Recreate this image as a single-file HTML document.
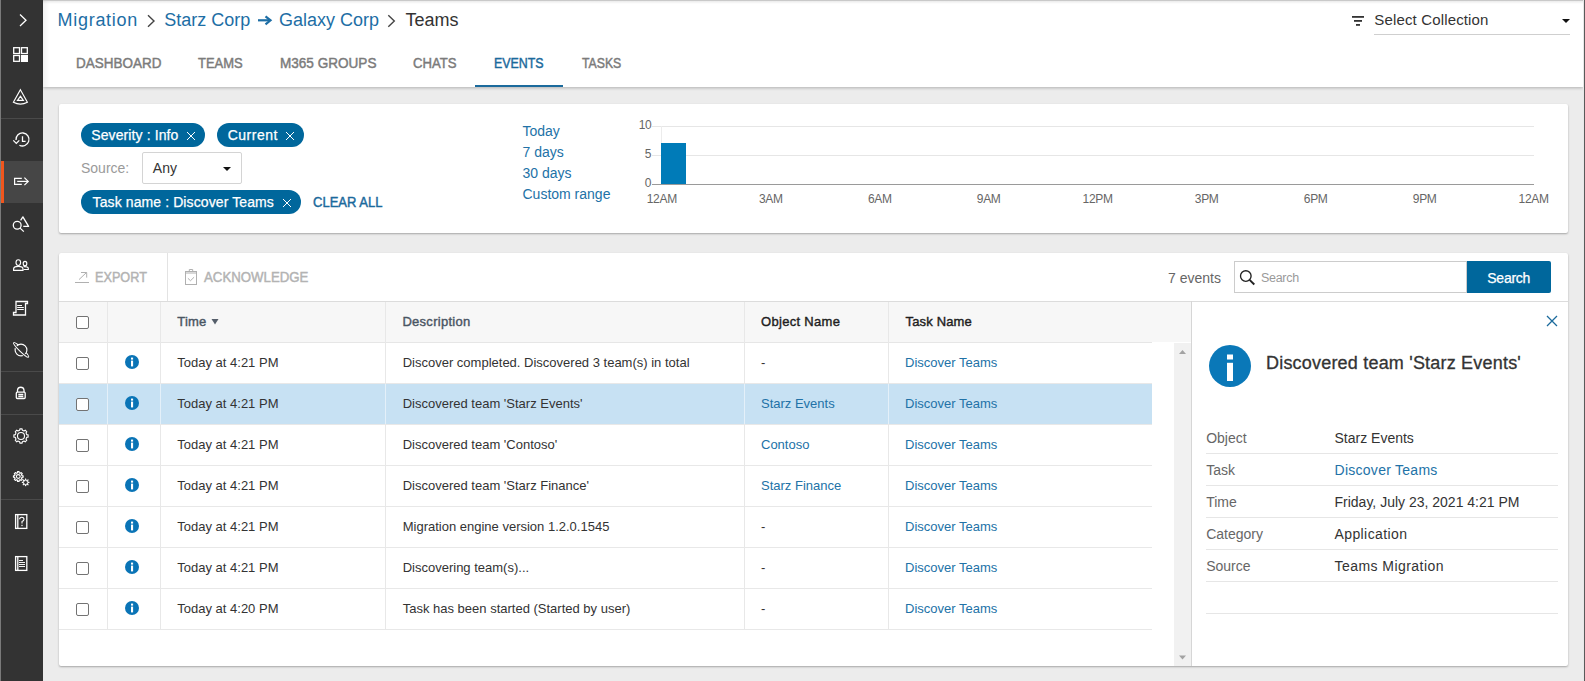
<!DOCTYPE html>
<html><head><meta charset="utf-8"><style>
html,body{margin:0;padding:0}
body{width:1585px;height:681px;overflow:hidden;position:relative;background:#ececec;font-family:"Liberation Sans",sans-serif}
.a{position:absolute}
.t{position:absolute;white-space:nowrap;line-height:1}
svg.a{overflow:visible}
</style></head><body>
<div class="a" style="left:0px;top:0px;width:1px;height:681px;background:#7a7a7a;"></div>
<div class="a" style="left:1px;top:0px;width:42px;height:681px;background:#333333;"></div>
<div class="a" style="left:1px;top:161px;width:42px;height:42px;background:#464646;"></div>
<div class="a" style="left:1px;top:161px;width:3px;height:42px;background:#f0561d;"></div>
<div class="a" style="left:1px;top:118px;width:42px;height:1px;background:#4a4a4a;"></div>
<div class="a" style="left:1px;top:371px;width:42px;height:1px;background:#4a4a4a;"></div>
<div class="a" style="left:1px;top:414px;width:42px;height:1px;background:#4a4a4a;"></div>
<div class="a" style="left:1px;top:499px;width:42px;height:1px;background:#4a4a4a;"></div>
<svg class="a" style="left:0;top:0" width="43" height="681" viewBox="0 0 43 681" fill="none" stroke="#fff" stroke-width="1.3"><path d="M20 14.5 L26 20.2 L20 26"/><rect x="13.7" y="47.7" width="5.8" height="5.8"/><rect x="21.5" y="47.7" width="5.8" height="5.8"/><rect x="13.7" y="55.5" width="5.8" height="5.8"/><rect x="21" y="55" width="7" height="7" fill="#fff" stroke="none"/><path d="M20.4 89.8 L27.4 102.3 Q20.4 106 13.4 102.3 Z" stroke-width="1.15"/><path d="M20.4 96.2 L23.3 100.4 L17.5 100.4 Z" stroke-width="1.2"/><path d="M16 140 A6.5 6.5 0 1 1 19.4 145.2"/><path d="M13.3 140.4 L16.3 143.4 L19.3 140.4"/><path d="M22.5 136.2 L22.5 141.3 L25.6 141.3"/><path d="M21.8 178.4 L14.6 178.4 L14.6 184.4 L21.8 184.4" stroke-width="1.2"/><path d="M17.2 181.4 L28.2 181.4" stroke-width="1.2"/><path d="M24.4 177.6 L28.2 181.4 L24.4 185.2" stroke-width="1.2"/><circle cx="17.2" cy="225.3" r="3.9"/><path d="M20.1 228.1 L23.8 231.6"/><path d="M20.6 220.3 L22.9 216.9 L28.6 226.4 L23.3 226.4" stroke-linejoin="round"/><ellipse cx="18.3" cy="262.6" rx="2.3" ry="2.9" stroke-width="1.15"/><path d="M13.6 270.3 L13.6 269 Q13.6 266.3 18.3 266.3 Q23 266.3 23 269 L23 270.3 Z" stroke-width="1.15"/><ellipse cx="25" cy="263.6" rx="1.8" ry="2.3" stroke-width="1.15"/><path d="M23.6 266.6 Q28.3 266.4 28.3 268.5 L28.3 269.5 L23.6 269.5" stroke-width="1.15"/><path d="M16 301.5 L27.5 301.5 L27.5 303.5 L25.5 303.5 L25.5 315 L13.5 315 L13.5 312.5 L16 312.5 Z"/><path d="M17.2 305.5 L22 305.5 M17.2 307.5 L23.8 307.5 M17.2 309.5 L23.8 309.5" stroke-width="1"/><g transform="translate(21.1 349.9) rotate(44)"><ellipse cx="0" cy="0" rx="10.4" ry="1.7" stroke-width="1.1"/></g><circle cx="21" cy="350" r="5.9" stroke-width="1.15" fill="#333"/><g transform="translate(21.1 349.9) rotate(44)"><path d="M10.4 0 A10.4 1.7 0 0 1 -10.4 0" stroke="#333" stroke-width="2.6"/><path d="M10.4 0 A10.4 1.7 0 0 1 -10.4 0" stroke-width="1.1"/></g><path d="M17.5 392 L17.5 390 A3.3 3.3 0 0 1 24 390 L24 392"/><rect x="16.3" y="392.2" width="8.9" height="6.3" rx="1"/><path d="M18.3 394.5 L23.3 394.5 M18.3 396.5 L23.3 396.5"/><circle cx="21" cy="436" r="3.5" stroke-width="1.1"/><path stroke-width="1.1" d="M19.67 430.25 L19.87 428.89 L22.13 428.89 L22.33 430.25 L24.12 430.99 L25.23 430.18 L26.82 431.77 L26.01 432.88 L26.75 434.67 L28.11 434.87 L28.11 437.13 L26.75 437.33 L26.01 439.12 L26.82 440.23 L25.23 441.82 L24.12 441.01 L22.33 441.75 L22.13 443.11 L19.87 443.11 L19.67 441.75 L17.88 441.01 L16.77 441.82 L15.18 440.23 L15.99 439.12 L15.25 437.33 L13.89 437.13 L13.89 434.87 L15.25 434.67 L15.99 432.88 L15.18 431.77 L16.77 430.18 L17.88 430.99 Z" stroke-linejoin="round"/><circle cx="18.3" cy="476.5" r="1.9" stroke-width="1.1"/><path d="M17.38 472.92 L17.53 471.66 L19.07 471.66 L19.22 472.92 L20.18 473.32 L21.18 472.54 L22.26 473.62 L21.48 474.62 L21.88 475.58 L23.14 475.73 L23.14 477.27 L21.88 477.42 L21.48 478.38 L22.26 479.38 L21.18 480.46 L20.18 479.68 L19.22 480.08 L19.07 481.34 L17.53 481.34 L17.38 480.08 L16.42 479.68 L15.42 480.46 L14.34 479.38 L15.12 478.38 L14.72 477.42 L13.46 477.27 L13.46 475.73 L14.72 475.58 L15.12 474.62 L14.34 473.62 L15.42 472.54 L16.42 473.32 Z" stroke-linejoin="round" stroke-width="1.15"/><path d="M25.60 478.70 L26.25 480.83 L28.22 479.78 L27.17 481.75 L29.30 482.40 L27.17 483.05 L28.22 485.02 L26.25 483.97 L25.60 486.10 L24.95 483.97 L22.98 485.02 L24.03 483.05 L21.90 482.40 L24.03 481.75 L22.98 479.78 L24.95 480.83 Z" stroke-width="1" stroke-linejoin="round"/><rect x="15.6" y="514.6" width="11.2" height="13.8"/><path d="M17.8 514.6 L17.8 528.4"/><rect x="15.6" y="556.6" width="11.2" height="13.8"/><path d="M17.8 556.6 L17.8 570.4"/><path d="M19 560.5 L23 560.5 M19 562.5 L25 562.5 M19 564.5 L25 564.5 M19 566.5 L25 566.5" stroke-width="0.95"/><path d="M19.6 519.3 Q19.6 517.2 21.8 517.2 Q24 517.2 24 519.3 Q24 520.8 22 521.6 L22 523.6" stroke-width="1.1"/><rect x="21.4" y="524.8" width="1.2" height="1.3" fill="#fff" stroke="none"/></svg>
<div class="a" style="left:43px;top:0px;width:1540px;height:87px;background:#fff;box-shadow:0 1px 3px rgba(0,0,0,0.25);"></div>
<div class="a" style="left:43px;top:0px;width:1540px;height:1px;background:#c9c9c9;"></div>
<div class="a" style="left:43px;top:1px;width:7px;height:86px;background:linear-gradient(to right, rgba(0,0,0,0.055), rgba(0,0,0,0));"></div>
<div class="a" style="left:43px;top:1px;width:1540px;height:3px;background:linear-gradient(to bottom, rgba(0,0,0,0.08), rgba(0,0,0,0));"></div>
<div class="a" style="left:1583px;top:0px;width:1px;height:681px;background:#e8e8e8;"></div>
<div class="a" style="left:1584px;top:0px;width:1px;height:681px;background:#5a5a5a;"></div>
<div class="t" style="left:57.5px;top:10.56px;font-size:18px;color:#1d6ea5;letter-spacing:0.72px;">Migration</div>
<div class="t" style="left:164.2px;top:10.56px;font-size:18px;color:#1d6ea5;">Starz Corp</div>
<div class="t" style="left:279.0px;top:10.56px;font-size:18px;color:#1d6ea5;">Galaxy Corp</div>
<div class="t" style="left:405.5px;top:10.56px;font-size:18px;color:#333;">Teams</div>
<svg class="a" style="left:140px;top:10px" width="270" height="25" fill="none" stroke="#444" stroke-width="1.4"><path d="M8 5.2 L14 11 L8 16.8"/><path d="M248.3 5.2 L254.3 11 L248.3 16.8"/><path d="M118 10.3 L130 10.3" stroke="#1d6ea5" stroke-width="2.2"/><path d="M125.5 6.3 L130.5 10.3 L125.5 14.3" stroke="#1d6ea5" stroke-width="2.2"/></svg>
<div class="t" style="left:75.5px;top:56.25px;font-size:14px;color:#7b7b7b;transform:scaleX(0.9630500000000001);transform-origin:0 0;-webkit-text-stroke:0.45px #7b7b7b;">DASHBOARD</div>
<div class="t" style="left:197.8px;top:56.25px;font-size:14px;color:#7b7b7b;transform:scaleX(0.927);transform-origin:0 0;-webkit-text-stroke:0.45px #7b7b7b;">TEAMS</div>
<div class="t" style="left:279.6px;top:56.25px;font-size:14px;color:#7b7b7b;transform:scaleX(0.9682);transform-origin:0 0;-webkit-text-stroke:0.45px #7b7b7b;">M365 GROUPS</div>
<div class="t" style="left:413.0px;top:56.25px;font-size:14px;color:#7b7b7b;transform:scaleX(0.9373);transform-origin:0 0;-webkit-text-stroke:0.45px #7b7b7b;">CHATS</div>
<div class="t" style="left:494.0px;top:56.25px;font-size:14px;color:#1b6a9c;transform:scaleX(0.8858);transform-origin:0 0;-webkit-text-stroke:0.45px #1b6a9c;">EVENTS</div>
<div class="t" style="left:581.5px;top:56.25px;font-size:14px;color:#7b7b7b;transform:scaleX(0.8755);transform-origin:0 0;-webkit-text-stroke:0.45px #7b7b7b;">TASKS</div>
<div class="a" style="left:475px;top:85px;width:88px;height:2px;background:#1b6a9c;"></div>
<div class="t" style="left:1374.3px;top:12.40px;font-size:15px;color:#333;letter-spacing:0.15px;">Select Collection</div>
<div class="a" style="left:1374px;top:34px;width:196px;height:1px;background:#cfcfcf;"></div>
<svg class="a" style="left:1350px;top:14px" width="225" height="14"><path d="M212 5 L220 5 L216 9 Z" fill="#111"/><rect x="2" y="2" width="12" height="1.8" fill="#333"/><rect x="4" y="6" width="8" height="1.8" fill="#333"/><rect x="6" y="10" width="4" height="1.8" fill="#333"/></svg>
<div class="a" style="left:59px;top:104px;width:1509px;height:129px;background:#fff;box-shadow:0 1px 2px rgba(0,0,0,0.3);border-radius:2px;"></div>
<div class="a" style="left:81px;top:123px;width:124px;height:24px;background:#00679c;border-radius:12px;"></div>
<div class="t" style="left:91.3px;top:128.15px;font-size:14px;color:#fff;letter-spacing:0.1px;-webkit-text-stroke:0.25px #fff;">Severity : Info</div>
<svg class="a" style="left:185.7px;top:130.6px" width="10" height="10" stroke="#fff" stroke-width="1.0"><path d="M1 1 L9 9 M9 1 L1 9"/></svg>
<div class="a" style="left:217px;top:123px;width:87px;height:24px;background:#00679c;border-radius:12px;"></div>
<div class="t" style="left:227.7px;top:128.15px;font-size:14px;color:#fff;letter-spacing:0.5px;-webkit-text-stroke:0.25px #fff;">Current</div>
<svg class="a" style="left:284.5px;top:130.6px" width="10" height="10" stroke="#fff" stroke-width="1.0"><path d="M1 1 L9 9 M9 1 L1 9"/></svg>
<div class="a" style="left:81px;top:190px;width:220px;height:24px;background:#00679c;border-radius:12px;"></div>
<div class="t" style="left:92.6px;top:195.15px;font-size:14px;color:#fff;letter-spacing:0.1px;-webkit-text-stroke:0.25px #fff;">Task name : Discover Teams</div>
<svg class="a" style="left:281.8px;top:197.6px" width="10" height="10" stroke="#fff" stroke-width="1.0"><path d="M1 1 L9 9 M9 1 L1 9"/></svg>
<div class="t" style="left:81.0px;top:161.05px;font-size:14px;color:#9a9a9a;">Source:</div>
<div class="a" style="left:142px;top:152px;width:100px;height:32px;background:#fff;border:1px solid #d4d4d4;box-sizing:border-box;border-radius:2px;"></div>
<div class="t" style="left:152.8px;top:161.05px;font-size:14px;color:#333;">Any</div>
<svg class="a" style="left:222px;top:166px" width="10" height="6"><path d="M1 1 L9 1 L5 5 Z" fill="#111"/></svg>
<div class="t" style="left:313.2px;top:195.45px;font-size:14px;color:#1b6a9c;transform:scaleX(0.93);transform-origin:0 0;-webkit-text-stroke:0.45px #1b6a9c;">CLEAR ALL</div>
<div class="t" style="left:522.5px;top:124.05px;font-size:14px;color:#2272a7;">Today</div>
<div class="t" style="left:522.5px;top:144.85px;font-size:14px;color:#2272a7;">7 days</div>
<div class="t" style="left:522.5px;top:165.75px;font-size:14px;color:#2272a7;">30 days</div>
<div class="t" style="left:522.5px;top:186.75px;font-size:14px;color:#2272a7;">Custom range</div>
<div class="a" style="left:652px;top:126px;width:882px;height:1px;background:#e6e6e6;"></div>
<div class="a" style="left:652px;top:155px;width:882px;height:1px;background:#e6e6e6;"></div>
<div class="a" style="left:652px;top:184px;width:882px;height:1px;background:#9a9a9a;"></div>
<div class="a" style="left:661px;top:126px;width:1px;height:58px;background:#ececec;"></div>
<div class="a" style="left:661px;top:143px;width:25px;height:41px;background:#007bb8;"></div>
<div class="t" style="left:621.5px;width:30px;text-align:right;top:118.84px;font-size:12px;color:#666;font-weight:normal;letter-spacing:-0.3px">10</div>
<div class="t" style="left:621.5px;width:30px;text-align:right;top:147.84px;font-size:12px;color:#666;font-weight:normal;letter-spacing:0px">5</div>
<div class="t" style="left:621.5px;width:30px;text-align:right;top:176.84px;font-size:12px;color:#666;font-weight:normal;letter-spacing:0px">0</div>
<div class="t" style="left:631.8px;width:60px;text-align:center;top:192.64px;font-size:12px;color:#666;font-weight:normal;letter-spacing:-0.3px">12AM</div>
<div class="t" style="left:740.8px;width:60px;text-align:center;top:192.64px;font-size:12px;color:#666;font-weight:normal;letter-spacing:-0.3px">3AM</div>
<div class="t" style="left:849.8px;width:60px;text-align:center;top:192.64px;font-size:12px;color:#666;font-weight:normal;letter-spacing:-0.3px">6AM</div>
<div class="t" style="left:958.7px;width:60px;text-align:center;top:192.64px;font-size:12px;color:#666;font-weight:normal;letter-spacing:-0.3px">9AM</div>
<div class="t" style="left:1067.7px;width:60px;text-align:center;top:192.64px;font-size:12px;color:#666;font-weight:normal;letter-spacing:-0.3px">12PM</div>
<div class="t" style="left:1176.7px;width:60px;text-align:center;top:192.64px;font-size:12px;color:#666;font-weight:normal;letter-spacing:-0.3px">3PM</div>
<div class="t" style="left:1285.7px;width:60px;text-align:center;top:192.64px;font-size:12px;color:#666;font-weight:normal;letter-spacing:-0.3px">6PM</div>
<div class="t" style="left:1394.7px;width:60px;text-align:center;top:192.64px;font-size:12px;color:#666;font-weight:normal;letter-spacing:-0.3px">9PM</div>
<div class="t" style="left:1503.6px;width:60px;text-align:center;top:192.64px;font-size:12px;color:#666;font-weight:normal;letter-spacing:-0.3px">12AM</div>
<div class="a" style="left:59px;top:253px;width:1509px;height:413px;background:#fff;box-shadow:0 1px 2px rgba(0,0,0,0.3);border-radius:2px;"></div>
<div class="a" style="left:59px;top:301px;width:1509px;height:1px;background:#dcdcdc;"></div>
<div class="a" style="left:167px;top:253px;width:1px;height:48px;background:#e3e3e3;"></div>
<svg class="a" style="left:74px;top:268px" width="130" height="20" fill="none" stroke="#b0b0b0" stroke-width="1"><path d="M1 14.5 L15 14.5"/><path d="M5 11.6 L12.4 4.6"/><path d="M7 4.5 L12.7 4.5 L12.7 9.6"/><rect x="111.5" y="3.5" width="11" height="13"/><path d="M111.5 5 L122.5 5"/><path d="M115.3 3.5 L115.3 1.5 L118.7 1.5 L118.7 3.5"/><path d="M113.9 10.3 L116.5 12.7 L120.1 9.2"/></svg>
<div class="t" style="left:94.5px;top:270.15px;font-size:14px;color:#b3b3b3;transform:scaleX(0.905);transform-origin:0 0;-webkit-text-stroke:0.45px #b3b3b3;">EXPORT</div>
<div class="t" style="left:204.0px;top:270.15px;font-size:14px;color:#b3b3b3;transform:scaleX(0.945);transform-origin:0 0;-webkit-text-stroke:0.45px #b3b3b3;">ACKNOWLEDGE</div>
<div class="t" style="left:1168.0px;top:270.95px;font-size:14px;color:#666;">7 events</div>
<div class="a" style="left:1234px;top:261px;width:233px;height:32px;background:#fff;border:1px solid #cccccc;box-sizing:border-box;"></div>
<svg class="a" style="left:1238px;top:268px" width="20" height="20" fill="none" stroke="#222" stroke-width="1.5"><circle cx="7.8" cy="8" r="5.3" stroke-width="1.35"/><path d="M11.6 11.8 L16.3 16.5" stroke-width="1.9"/></svg>
<div class="t" style="left:1261.0px;top:272.22px;font-size:12.5px;color:#9a9a9a;letter-spacing:-0.3px;">Search</div>
<div class="a" style="left:1467px;top:261px;width:84px;height:32px;background:#00679c;border-radius:0 2px 2px 0;"></div>
<div class="t" style="left:1487.3px;top:270.95px;font-size:14px;color:#fff;letter-spacing:-0.26px;-webkit-text-stroke:0.25px #fff;">Search</div>
<div class="a" style="left:59px;top:302px;width:1132px;height:40px;background:#f7f7f7;"></div>
<div class="a" style="left:59px;top:342px;width:1093px;height:1px;background:#e6e6e6;"></div>
<div class="a" style="left:107px;top:302px;width:1px;height:327px;background:#e8e8e8;"></div>
<div class="a" style="left:160px;top:302px;width:1px;height:327px;background:#e8e8e8;"></div>
<div class="a" style="left:385px;top:302px;width:1px;height:327px;background:#e8e8e8;"></div>
<div class="a" style="left:744px;top:302px;width:1px;height:327px;background:#e8e8e8;"></div>
<div class="a" style="left:888px;top:302px;width:1px;height:327px;background:#e8e8e8;"></div>
<div class="a" style="left:76px;top:316px;width:13px;height:13px;background:#fff;border:1px solid #737373;box-sizing:border-box;border-radius:2px;"></div>
<div class="t" style="left:177.3px;top:315.00px;font-size:13px;color:#4a5563;letter-spacing:0.2px;-webkit-text-stroke:0.4px #4a5563;">Time</div>
<svg class="a" style="left:211px;top:318px" width="9" height="8"><path d="M0.5 1 L7.5 1 L4 6.5 Z" fill="#555e6a"/></svg>
<div class="t" style="left:402.4px;top:315.00px;font-size:13px;color:#4a5563;letter-spacing:0.28px;-webkit-text-stroke:0.4px #4a5563;">Description</div>
<div class="t" style="left:761.0px;top:315.00px;font-size:13px;color:#1e1e1e;letter-spacing:0.3px;-webkit-text-stroke:0.4px #1e1e1e;">Object Name</div>
<div class="t" style="left:905.6px;top:315.00px;font-size:13px;color:#1e1e1e;letter-spacing:0.15px;-webkit-text-stroke:0.4px #1e1e1e;">Task Name</div>
<div class="a" style="left:59px;top:383px;width:1093px;height:1px;background:#e8e8e8;"></div>
<div class="a" style="left:76px;top:357px;width:13px;height:13px;background:#fff;border:1px solid #737373;box-sizing:border-box;border-radius:2px;"></div>
<svg class="a" style="left:125px;top:355px" width="14" height="14"><circle cx="7" cy="7" r="7" fill="#0a74b6"/><rect x="6" y="2.6" width="2.1" height="2" fill="#fff"/><rect x="6" y="5.6" width="2.1" height="5.8" fill="#fff"/></svg>
<div class="t" style="left:177.3px;top:355.80px;font-size:13px;color:#333;">Today at 4:21 PM</div>
<div class="t" style="left:402.7px;top:355.80px;font-size:13px;color:#333;">Discover completed. Discovered 3 team(s) in total</div>
<div class="t" style="left:761.0px;top:355.80px;font-size:13px;color:#333;">-</div>
<div class="t" style="left:905.0px;top:355.80px;font-size:13px;color:#2272a7;">Discover Teams</div>
<div class="a" style="left:59px;top:384px;width:1093px;height:40px;background:#c7e1f3;"></div>
<div class="a" style="left:107px;top:384px;width:1px;height:40px;background:#e4f0f9;"></div>
<div class="a" style="left:160px;top:384px;width:1px;height:40px;background:#e4f0f9;"></div>
<div class="a" style="left:385px;top:384px;width:1px;height:40px;background:#e4f0f9;"></div>
<div class="a" style="left:744px;top:384px;width:1px;height:40px;background:#e4f0f9;"></div>
<div class="a" style="left:888px;top:384px;width:1px;height:40px;background:#e4f0f9;"></div>
<div class="a" style="left:59px;top:424px;width:1093px;height:1px;background:#e8e8e8;"></div>
<div class="a" style="left:76px;top:398px;width:13px;height:13px;background:#fff;border:1px solid #737373;box-sizing:border-box;border-radius:2px;"></div>
<svg class="a" style="left:125px;top:396px" width="14" height="14"><circle cx="7" cy="7" r="7" fill="#0a74b6"/><rect x="6" y="2.6" width="2.1" height="2" fill="#fff"/><rect x="6" y="5.6" width="2.1" height="5.8" fill="#fff"/></svg>
<div class="t" style="left:177.3px;top:396.80px;font-size:13px;color:#333;">Today at 4:21 PM</div>
<div class="t" style="left:402.7px;top:396.80px;font-size:13px;color:#333;">Discovered team 'Starz Events'</div>
<div class="t" style="left:761.0px;top:396.80px;font-size:13px;color:#2272a7;">Starz Events</div>
<div class="t" style="left:905.0px;top:396.80px;font-size:13px;color:#2272a7;">Discover Teams</div>
<div class="a" style="left:59px;top:465px;width:1093px;height:1px;background:#e8e8e8;"></div>
<div class="a" style="left:76px;top:439px;width:13px;height:13px;background:#fff;border:1px solid #737373;box-sizing:border-box;border-radius:2px;"></div>
<svg class="a" style="left:125px;top:437px" width="14" height="14"><circle cx="7" cy="7" r="7" fill="#0a74b6"/><rect x="6" y="2.6" width="2.1" height="2" fill="#fff"/><rect x="6" y="5.6" width="2.1" height="5.8" fill="#fff"/></svg>
<div class="t" style="left:177.3px;top:437.80px;font-size:13px;color:#333;">Today at 4:21 PM</div>
<div class="t" style="left:402.7px;top:437.80px;font-size:13px;color:#333;">Discovered team 'Contoso'</div>
<div class="t" style="left:761.0px;top:437.80px;font-size:13px;color:#2272a7;">Contoso</div>
<div class="t" style="left:905.0px;top:437.80px;font-size:13px;color:#2272a7;">Discover Teams</div>
<div class="a" style="left:59px;top:506px;width:1093px;height:1px;background:#e8e8e8;"></div>
<div class="a" style="left:76px;top:480px;width:13px;height:13px;background:#fff;border:1px solid #737373;box-sizing:border-box;border-radius:2px;"></div>
<svg class="a" style="left:125px;top:478px" width="14" height="14"><circle cx="7" cy="7" r="7" fill="#0a74b6"/><rect x="6" y="2.6" width="2.1" height="2" fill="#fff"/><rect x="6" y="5.6" width="2.1" height="5.8" fill="#fff"/></svg>
<div class="t" style="left:177.3px;top:478.80px;font-size:13px;color:#333;">Today at 4:21 PM</div>
<div class="t" style="left:402.7px;top:478.80px;font-size:13px;color:#333;">Discovered team 'Starz Finance'</div>
<div class="t" style="left:761.0px;top:478.80px;font-size:13px;color:#2272a7;">Starz Finance</div>
<div class="t" style="left:905.0px;top:478.80px;font-size:13px;color:#2272a7;">Discover Teams</div>
<div class="a" style="left:59px;top:547px;width:1093px;height:1px;background:#e8e8e8;"></div>
<div class="a" style="left:76px;top:521px;width:13px;height:13px;background:#fff;border:1px solid #737373;box-sizing:border-box;border-radius:2px;"></div>
<svg class="a" style="left:125px;top:519px" width="14" height="14"><circle cx="7" cy="7" r="7" fill="#0a74b6"/><rect x="6" y="2.6" width="2.1" height="2" fill="#fff"/><rect x="6" y="5.6" width="2.1" height="5.8" fill="#fff"/></svg>
<div class="t" style="left:177.3px;top:519.80px;font-size:13px;color:#333;">Today at 4:21 PM</div>
<div class="t" style="left:402.7px;top:519.80px;font-size:13px;color:#333;">Migration engine version 1.2.0.1545</div>
<div class="t" style="left:761.0px;top:519.80px;font-size:13px;color:#333;">-</div>
<div class="t" style="left:905.0px;top:519.80px;font-size:13px;color:#2272a7;">Discover Teams</div>
<div class="a" style="left:59px;top:588px;width:1093px;height:1px;background:#e8e8e8;"></div>
<div class="a" style="left:76px;top:562px;width:13px;height:13px;background:#fff;border:1px solid #737373;box-sizing:border-box;border-radius:2px;"></div>
<svg class="a" style="left:125px;top:560px" width="14" height="14"><circle cx="7" cy="7" r="7" fill="#0a74b6"/><rect x="6" y="2.6" width="2.1" height="2" fill="#fff"/><rect x="6" y="5.6" width="2.1" height="5.8" fill="#fff"/></svg>
<div class="t" style="left:177.3px;top:560.80px;font-size:13px;color:#333;">Today at 4:21 PM</div>
<div class="t" style="left:402.7px;top:560.80px;font-size:13px;color:#333;">Discovering team(s)...</div>
<div class="t" style="left:761.0px;top:560.80px;font-size:13px;color:#333;">-</div>
<div class="t" style="left:905.0px;top:560.80px;font-size:13px;color:#2272a7;">Discover Teams</div>
<div class="a" style="left:59px;top:629px;width:1093px;height:1px;background:#e8e8e8;"></div>
<div class="a" style="left:76px;top:603px;width:13px;height:13px;background:#fff;border:1px solid #737373;box-sizing:border-box;border-radius:2px;"></div>
<svg class="a" style="left:125px;top:601px" width="14" height="14"><circle cx="7" cy="7" r="7" fill="#0a74b6"/><rect x="6" y="2.6" width="2.1" height="2" fill="#fff"/><rect x="6" y="5.6" width="2.1" height="5.8" fill="#fff"/></svg>
<div class="t" style="left:177.3px;top:601.80px;font-size:13px;color:#333;">Today at 4:20 PM</div>
<div class="t" style="left:402.7px;top:601.80px;font-size:13px;color:#333;">Task has been started (Started by user)</div>
<div class="t" style="left:761.0px;top:601.80px;font-size:13px;color:#333;">-</div>
<div class="t" style="left:905.0px;top:601.80px;font-size:13px;color:#2272a7;">Discover Teams</div>
<div class="a" style="left:1174px;top:343px;width:17px;height:323px;background:#f1f1f1;"></div>
<svg class="a" style="left:1174px;top:343px" width="17" height="323"><path d="M5 11 L12 11 L8.5 7 Z" fill="#a3a3a3"/><path d="M5 312.5 L12 312.5 L8.5 316.5 Z" fill="#a3a3a3"/></svg>
<div class="a" style="left:1191px;top:301px;width:1px;height:365px;background:#d6d6d6;"></div>
<svg class="a" style="left:1545px;top:314px" width="14" height="14" stroke="#1b6a9c" stroke-width="1.3"><path d="M2 2 L12 12 M12 2 L2 12"/></svg>
<svg class="a" style="left:1209px;top:345px" width="42" height="42"><circle cx="21" cy="21" r="21" fill="#0a78b8"/><rect x="18" y="9.5" width="6" height="5" fill="#fff"/><rect x="18" y="17.8" width="6" height="18.2" fill="#fff"/></svg>
<div class="t" style="left:1266.0px;top:353.56px;font-size:18px;color:#333;letter-spacing:0.2px;-webkit-text-stroke:0.3px #333;">Discovered team 'Starz Events'</div>
<div class="t" style="left:1206.2px;top:431.05px;font-size:14px;color:#666;">Object</div>
<div class="t" style="left:1334.5px;top:431.05px;font-size:14px;color:#333;">Starz Events</div>
<div class="t" style="left:1206.2px;top:463.05px;font-size:14px;color:#666;">Task</div>
<div class="t" style="left:1334.5px;top:463.05px;font-size:14px;color:#2272a7;letter-spacing:0.27px;">Discover Teams</div>
<div class="t" style="left:1206.2px;top:495.05px;font-size:14px;color:#666;">Time</div>
<div class="t" style="left:1334.5px;top:495.05px;font-size:14px;color:#333;">Friday, July 23, 2021 4:21 PM</div>
<div class="t" style="left:1206.2px;top:527.05px;font-size:14px;color:#666;">Category</div>
<div class="t" style="left:1334.5px;top:527.05px;font-size:14px;color:#333;letter-spacing:0.4px;">Application</div>
<div class="t" style="left:1206.2px;top:559.05px;font-size:14px;color:#666;">Source</div>
<div class="t" style="left:1334.5px;top:559.05px;font-size:14px;color:#333;letter-spacing:0.45px;">Teams Migration</div>
<div class="a" style="left:1206px;top:453px;width:352px;height:1px;background:#e6e6e6;"></div>
<div class="a" style="left:1206px;top:485px;width:352px;height:1px;background:#e6e6e6;"></div>
<div class="a" style="left:1206px;top:517px;width:352px;height:1px;background:#e6e6e6;"></div>
<div class="a" style="left:1206px;top:549px;width:352px;height:1px;background:#e6e6e6;"></div>
<div class="a" style="left:1206px;top:581px;width:352px;height:1px;background:#e6e6e6;"></div>
<div class="a" style="left:1206px;top:613px;width:352px;height:1px;background:#e6e6e6;"></div>
</body></html>
